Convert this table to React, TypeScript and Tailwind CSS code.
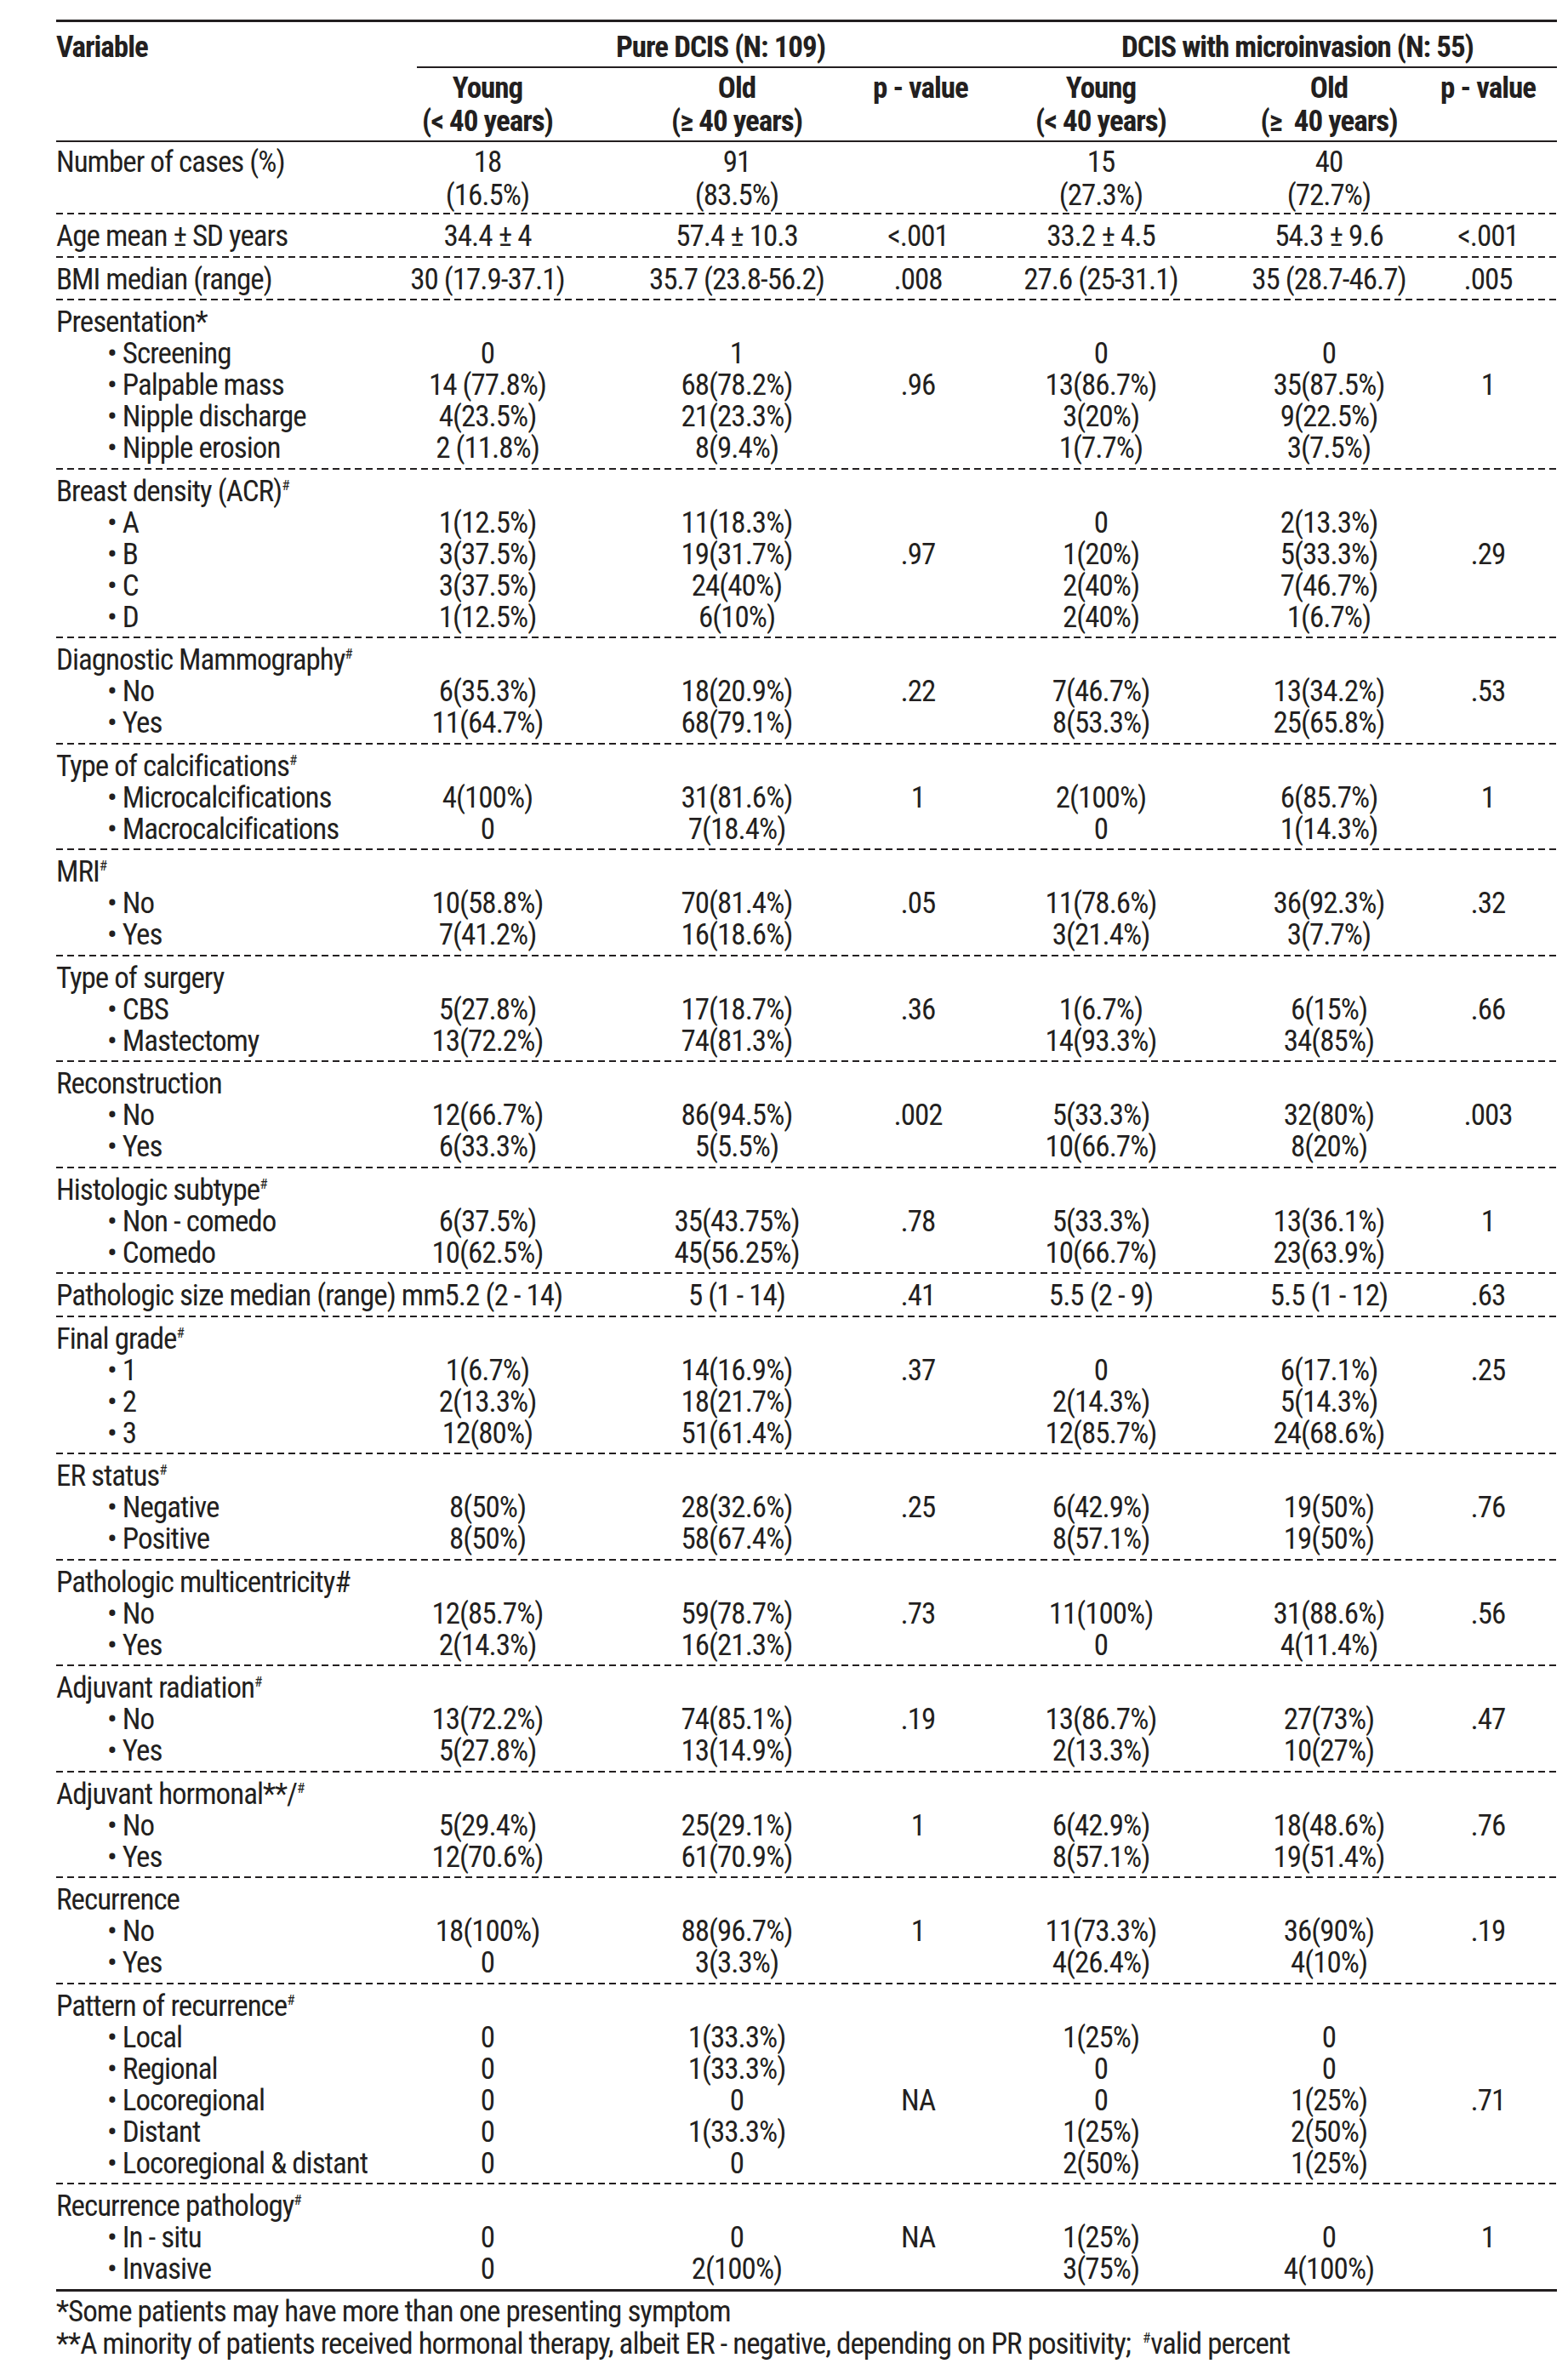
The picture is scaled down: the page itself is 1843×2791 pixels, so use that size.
import React from "react";

const COLS = "grid grid-cols-[374px_266px_320px_106px_324px_212px_162px]";

const S = () => <sup className="text-[17px] top-[-13px] tracking-normal">#</sup>;

type Sub = { label: React.ReactNode; vals: string[] };
type Group = { label: React.ReactNode; vals?: string[]; rows?: Sub[]; span?: boolean };

const groups: Group[] = [
  { label: "Age mean ± SD years", vals: ["34.4 ± 4", "57.4 ± 10.3", "<.001", "33.2 ± 4.5", "54.3 ± 9.6", "<.001"] },
  { label: "BMI median (range)", vals: ["30 (17.9-37.1)", "35.7 (23.8-56.2)", ".008", "27.6 (25-31.1)", "35 (28.7-46.7)", ".005"] },
  {
    label: "Presentation*",
    rows: [
      { label: "Screening", vals: ["0", "1", "", "0", "0", ""] },
      { label: "Palpable mass", vals: ["14 (77.8%)", "68(78.2%)", ".96", "13(86.7%)", "35(87.5%)", "1"] },
      { label: "Nipple discharge", vals: ["4(23.5%)", "21(23.3%)", "", "3(20%)", "9(22.5%)", ""] },
      { label: "Nipple erosion", vals: ["2 (11.8%)", "8(9.4%)", "", "1(7.7%)", "3(7.5%)", ""] },
    ],
  },
  {
    label: <>Breast density (ACR)<S /></>,
    rows: [
      { label: "A", vals: ["1(12.5%)", "11(18.3%)", "", "0", "2(13.3%)", ""] },
      { label: "B", vals: ["3(37.5%)", "19(31.7%)", ".97", "1(20%)", "5(33.3%)", ".29"] },
      { label: "C", vals: ["3(37.5%)", "24(40%)", "", "2(40%)", "7(46.7%)", ""] },
      { label: "D", vals: ["1(12.5%)", "6(10%)", "", "2(40%)", "1(6.7%)", ""] },
    ],
  },
  {
    label: <>Diagnostic Mammography<S /></>,
    rows: [
      { label: "No", vals: ["6(35.3%)", "18(20.9%)", ".22", "7(46.7%)", "13(34.2%)", ".53"] },
      { label: "Yes", vals: ["11(64.7%)", "68(79.1%)", "", "8(53.3%)", "25(65.8%)", ""] },
    ],
  },
  {
    label: <>Type of calcifications<S /></>,
    rows: [
      { label: "Microcalcifications", vals: ["4(100%)", "31(81.6%)", "1", "2(100%)", "6(85.7%)", "1"] },
      { label: "Macrocalcifications", vals: ["0", "7(18.4%)", "", "0", "1(14.3%)", ""] },
    ],
  },
  {
    label: <>MRI<S /></>,
    rows: [
      { label: "No", vals: ["10(58.8%)", "70(81.4%)", ".05", "11(78.6%)", "36(92.3%)", ".32"] },
      { label: "Yes", vals: ["7(41.2%)", "16(18.6%)", "", "3(21.4%)", "3(7.7%)", ""] },
    ],
  },
  {
    label: "Type of surgery",
    rows: [
      { label: "CBS", vals: ["5(27.8%)", "17(18.7%)", ".36", "1(6.7%)", "6(15%)", ".66"] },
      { label: "Mastectomy", vals: ["13(72.2%)", "74(81.3%)", "", "14(93.3%)", "34(85%)", ""] },
    ],
  },
  {
    label: "Reconstruction",
    rows: [
      { label: "No", vals: ["12(66.7%)", "86(94.5%)", ".002", "5(33.3%)", "32(80%)", ".003"] },
      { label: "Yes", vals: ["6(33.3%)", "5(5.5%)", "", "10(66.7%)", "8(20%)", ""] },
    ],
  },
  {
    label: <>Histologic subtype<S /></>,
    rows: [
      { label: "Non - comedo", vals: ["6(37.5%)", "35(43.75%)", ".78", "5(33.3%)", "13(36.1%)", "1"] },
      { label: "Comedo", vals: ["10(62.5%)", "45(56.25%)", "", "10(66.7%)", "23(63.9%)", ""] },
    ],
  },
  { label: "Pathologic size median (range) mm5.2 (2 - 14)", span: true, vals: ["5 (1 - 14)", ".41", "5.5 (2 - 9)", "5.5 (1 - 12)", ".63"] },
  {
    label: <>Final grade<S /></>,
    rows: [
      { label: "1", vals: ["1(6.7%)", "14(16.9%)", ".37", "0", "6(17.1%)", ".25"] },
      { label: "2", vals: ["2(13.3%)", "18(21.7%)", "", "2(14.3%)", "5(14.3%)", ""] },
      { label: "3", vals: ["12(80%)", "51(61.4%)", "", "12(85.7%)", "24(68.6%)", ""] },
    ],
  },
  {
    label: <>ER status<S /></>,
    rows: [
      { label: "Negative", vals: ["8(50%)", "28(32.6%)", ".25", "6(42.9%)", "19(50%)", ".76"] },
      { label: "Positive", vals: ["8(50%)", "58(67.4%)", "", "8(57.1%)", "19(50%)", ""] },
    ],
  },
  {
    label: "Pathologic multicentricity#",
    rows: [
      { label: "No", vals: ["12(85.7%)", "59(78.7%)", ".73", "11(100%)", "31(88.6%)", ".56"] },
      { label: "Yes", vals: ["2(14.3%)", "16(21.3%)", "", "0", "4(11.4%)", ""] },
    ],
  },
  {
    label: <>Adjuvant radiation<S /></>,
    rows: [
      { label: "No", vals: ["13(72.2%)", "74(85.1%)", ".19", "13(86.7%)", "27(73%)", ".47"] },
      { label: "Yes", vals: ["5(27.8%)", "13(14.9%)", "", "2(13.3%)", "10(27%)", ""] },
    ],
  },
  {
    label: <>Adjuvant hormonal**/<S /></>,
    rows: [
      { label: "No", vals: ["5(29.4%)", "25(29.1%)", "1", "6(42.9%)", "18(48.6%)", ".76"] },
      { label: "Yes", vals: ["12(70.6%)", "61(70.9%)", "", "8(57.1%)", "19(51.4%)", ""] },
    ],
  },
  {
    label: "Recurrence",
    rows: [
      { label: "No", vals: ["18(100%)", "88(96.7%)", "1", "11(73.3%)", "36(90%)", ".19"] },
      { label: "Yes", vals: ["0", "3(3.3%)", "", "4(26.4%)", "4(10%)", ""] },
    ],
  },
  {
    label: <>Pattern of recurrence<S /></>,
    rows: [
      { label: "Local", vals: ["0", "1(33.3%)", "", "1(25%)", "0", ""] },
      { label: "Regional", vals: ["0", "1(33.3%)", "", "0", "0", ""] },
      { label: "Locoregional", vals: ["0", "0", "NA", "0", "1(25%)", ".71"] },
      { label: "Distant", vals: ["0", "1(33.3%)", "", "1(25%)", "2(50%)", ""] },
      { label: "Locoregional & distant", vals: ["0", "0", "", "2(50%)", "1(25%)", ""] },
    ],
  },
  {
    label: <>Recurrence pathology<S /></>,
    rows: [
      { label: "In - situ", vals: ["0", "0", "NA", "1(25%)", "0", "1"] },
      { label: "Invasive", vals: ["0", "2(100%)", "", "3(75%)", "4(100%)", ""] },
    ],
  },
];

function Row({ label, vals, sub, span }: { label: React.ReactNode; vals: string[]; sub?: boolean; span?: boolean }) {
  return (
    <div className={`${COLS} h-[37px] leading-[37px] whitespace-nowrap`}>
      <div className={`${sub ? "pl-[60px]" : ""} ${span ? "col-span-2" : ""}`}>
        {sub ? <>•&nbsp;{label}</> : label}
      </div>
      {vals.map((v, i) => (
        <div key={i} className="text-center">
          {v}
        </div>
      ))}
    </div>
  );
}

const Dash = () => (
  <div className="h-[2px] bg-[image:repeating-linear-gradient(90deg,#231f20_0px,#231f20_8px,transparent_8px,transparent_13px)]" />
);

export default function App() {
  return (
    <div className="min-h-[2791px] w-[1843px] bg-white text-[#231f20] font-['Roboto_Condensed','Liberation_Sans',sans-serif] text-[35px] tracking-[-1px]">
      <div className="pl-[66px] pt-[23px] w-[1830px]">
        <div className="h-[3px] bg-[#231f20]" />
        <div className="flex font-bold leading-[38px] pt-[11px] pb-[3px] whitespace-nowrap">
          <div className="w-[424px]">Variable</div>
          <div className="w-[714px] text-center">Pure DCIS (N: 109)</div>
          <div className="flex-1 text-center pl-[16px]">DCIS with microinvasion (N: 55)</div>
        </div>
        <div className="ml-[424px] h-[2px] bg-[#231f20]" />
        <div className={`${COLS} font-bold leading-[39px] pt-[3.5px] pb-[3.5px] whitespace-pre items-start`}>
          <div />
          <div className="text-center">Young<br />(&lt; 40 years)</div>
          <div className="text-center">Old<br />(≥ 40 years)</div>
          <div className="text-center">p - value</div>
          <div className="text-center">Young<br />(&lt; 40 years)</div>
          <div className="text-center">Old<br />(≥  40 years)</div>
          <div className="text-center">p - value</div>
        </div>
        <div className="h-[2px] bg-[#231f20]" />
        <div className={`${COLS} leading-[39px] pt-[3.5px] pb-[1.5px] whitespace-nowrap`}>
          <div>Number of cases (%)</div>
          <div className="text-center">18<br />(16.5%)</div>
          <div className="text-center">91<br />(83.5%)</div>
          <div />
          <div className="text-center">15<br />(27.3%)</div>
          <div className="text-center">40<br />(72.7%)</div>
          <div />
        </div>
        <Dash />
        {groups.map((g, gi) => (
          <React.Fragment key={gi}>
            <div className="pt-[7px] pb-[4.5px]">
              {g.rows ? (
                <>
                  <Row label={g.label} vals={["", "", "", "", "", ""]} />
                  {g.rows.map((r, ri) => (
                    <Row key={ri} label={r.label} vals={r.vals} sub />
                  ))}
                </>
              ) : (
                <Row label={g.label} vals={g.vals || []} span={g.span} />
              )}
            </div>
            {gi === groups.length - 1 ? <div className="h-[3px] bg-[#231f20]" /> : <Dash />}
          </React.Fragment>
        ))}
        <div className="pt-[5px] leading-[38px] whitespace-nowrap">
          <div>*Some patients may have more than one presenting symptom</div>
          <div>
            **A minority of patients received hormonal therapy, albeit ER - negative, depending on PR positivity;&nbsp;{" "}
            <sup className="text-[17px] top-[-13px] tracking-normal">#</sup>valid percent
          </div>
        </div>
      </div>
    </div>
  );
}
